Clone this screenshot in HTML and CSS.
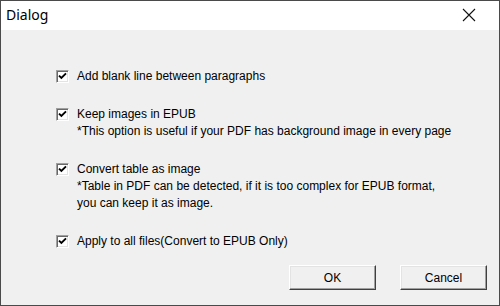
FILE: index.html
```html
<!DOCTYPE html>
<html lang="en">
<head>
    <meta charset="UTF-8">
    <meta name="viewport" content="width=device-width, initial-scale=1.0">
    <title>Dialog</title>
    <link rel="stylesheet" href="styles.css">
</head>
<body>
    <div class="window">
        <div class="titlebar">
            <span class="title">Dialog</span>
            <span class="close">
                <svg width="14" height="14" viewBox="0 0 14 14">
                    <path d="M1 1 L13 13 M13 1 L1 13" stroke="#111" stroke-width="1.1" fill="none"/>
                </svg>
            </span>
        </div>

        <div class="content">
            <div class="options">
                <div class="option">
                    <label class="check">
                        <span class="box"><svg width="9" height="9" viewBox="0 0 9 9"><path d="M1 3.6 L3.4 6 L8 1.4" stroke="#000" stroke-width="1.9" fill="none"/></svg></span>
                        Add blank line between paragraphs
                    </label>
                </div>
                <div class="option">
                    <label class="check">
                        <span class="box"><svg width="9" height="9" viewBox="0 0 9 9"><path d="M1 3.6 L3.4 6 L8 1.4" stroke="#000" stroke-width="1.9" fill="none"/></svg></span>
                        Keep images in EPUB
                    </label>
                    <p class="note">*This option is useful if your PDF has background image in every page</p>
                </div>
                <div class="option">
                    <label class="check">
                        <span class="box"><svg width="9" height="9" viewBox="0 0 9 9"><path d="M1 3.6 L3.4 6 L8 1.4" stroke="#000" stroke-width="1.9" fill="none"/></svg></span>
                        Convert table as image
                    </label>
                    <p class="note">*Table in PDF can be detected, if it is too complex for EPUB format,<br>you can keep it as image.</p>
                </div>
                <div class="option">
                    <label class="check">
                        <span class="box"><svg width="9" height="9" viewBox="0 0 9 9"><path d="M1 3.6 L3.4 6 L8 1.4" stroke="#000" stroke-width="1.9" fill="none"/></svg></span>
                        Apply to all files(Convert to EPUB Only)
                    </label>
                </div>
            </div>

            <div class="buttons">
                <button class="btn">OK</button>
                <button class="btn">Cancel</button>
            </div>
        </div>
    </div>
</body>
</html>
```

FILE: styles.css
```css
html, body {
    margin: 0;
    padding: 0;
}
body {
    font-family: "Liberation Sans", Arial, sans-serif;
    font-size: 12px;
    color: #000;
    background-color: #f0f0f0;
}
.window {
    width: 500px;
    height: 306px;
    box-sizing: border-box;
    border: 1px solid #4a4a4a;
    display: flex;
    flex-direction: column;
    background-color: #f0f0f0;
}
.titlebar {
    height: 29px;
    background-color: #fff;
    display: flex;
    align-items: center;
    justify-content: space-between;
    padding: 0 23px 0 5px;
}
.title {
    font-family: "Noto Sans", sans-serif;
    font-size: 14px;
    color: #000;
    padding-bottom: 3px;
}
.close {
    display: flex;
    padding-bottom: 2px;
}
.content {
    flex: 1;
    display: flex;
    flex-direction: column;
    padding: 38px 12px 0 55px;
}
.options {
    display: flex;
    flex-direction: column;
    gap: 21px;
}
.check {
    display: flex;
    align-items: center;
    gap: 8px;
    line-height: 17px;
}
.box {
    width: 13px;
    height: 13px;
    box-sizing: border-box;
    background-color: #fff;
    border: 1px solid;
    border-color: #a0a0a0 #fff #fff #a0a0a0;
    box-shadow: inset 1px 1px 0 #696969, inset -1px -1px 0 #e3e3e3;
    display: flex;
    align-items: center;
    justify-content: center;
}
.note {
    margin: 0;
    padding-left: 21px;
    line-height: 17px;
}
.buttons {
    display: flex;
    justify-content: flex-end;
    gap: 24px;
    margin-top: 15px;
}
.btn {
    width: 87px;
    height: 25px;
    font-family: "Liberation Sans", Arial, sans-serif;
    font-size: 12px;
    color: #000;
    background-color: #f0f0f0;
    border: 1px solid;
    border-color: #fff #404040 #404040 #fff;
    box-shadow: inset -1px -1px 0 #a0a0a0, inset 1px 1px 0 #e3e3e3;
    padding: 0;
}
```
